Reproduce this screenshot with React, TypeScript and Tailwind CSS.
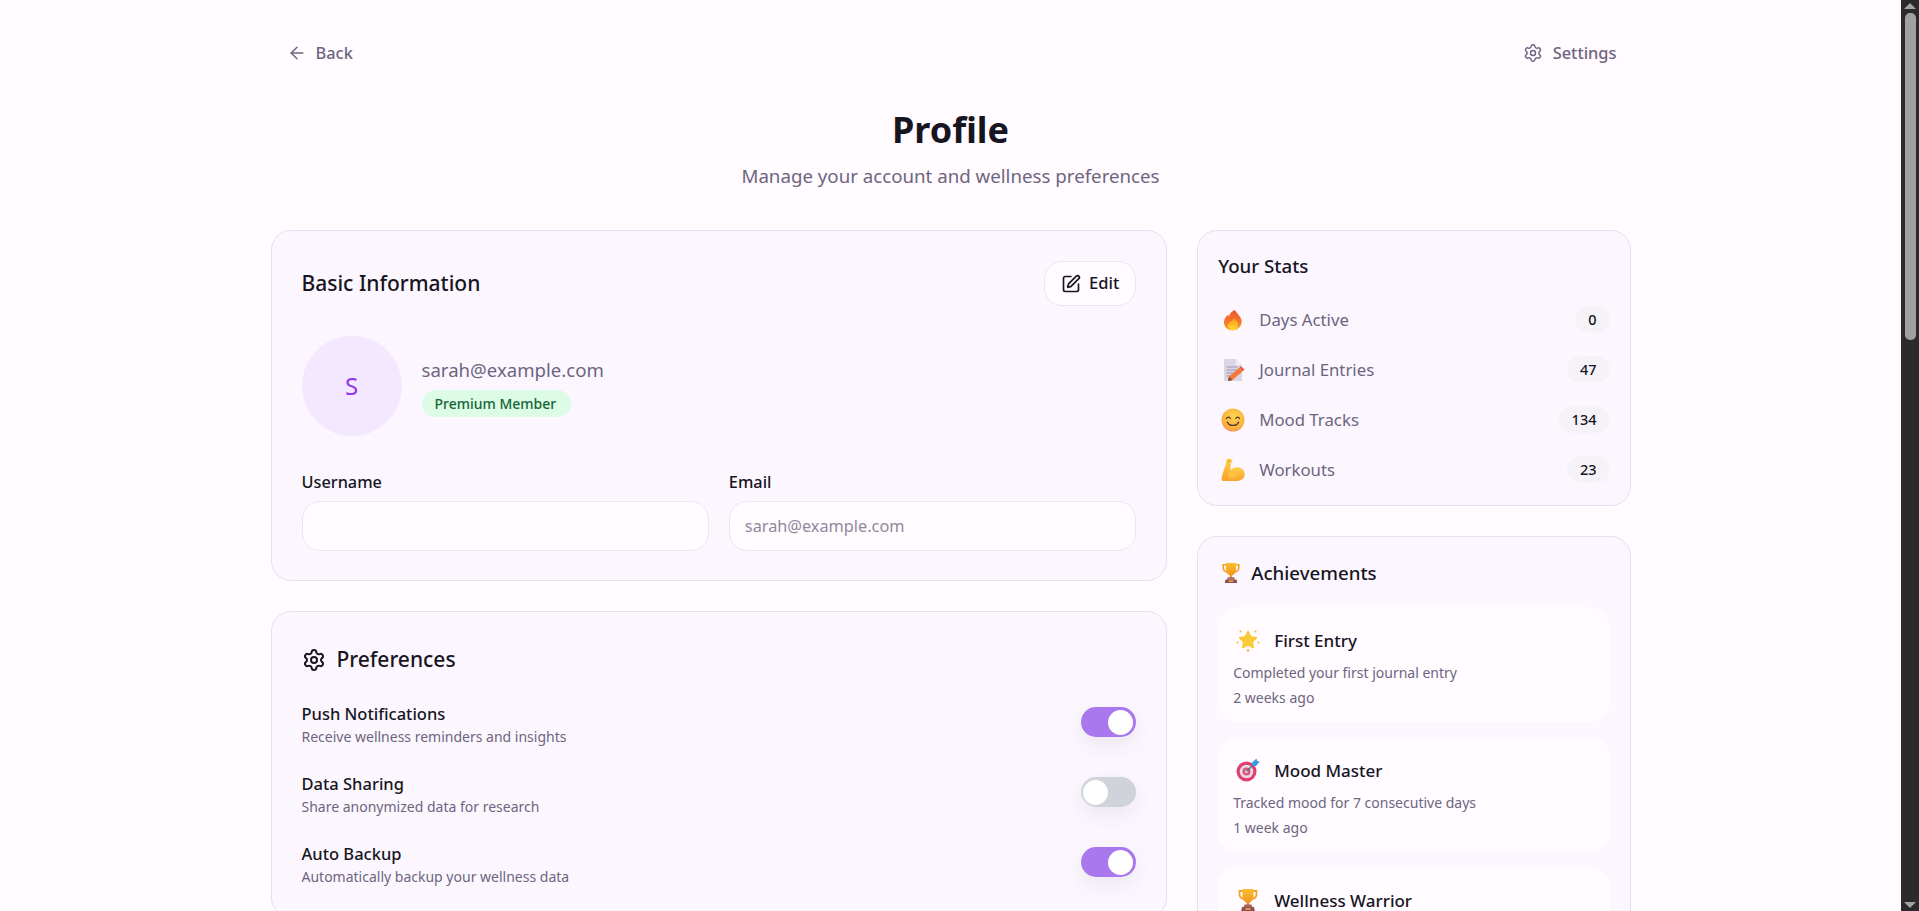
import { ArrowLeft, Settings, SquarePen } from "lucide-react";
import type { ReactNode } from "react";

function Flame() {
  return (
    <svg viewBox="0 0 24 24" className="h-6 w-6">
      <defs>
        <linearGradient id="fl" x1="0" y1="0" x2="0" y2="1">
          <stop offset="0" stopColor="#f0562e" />
          <stop offset="0.6" stopColor="#f5762b" />
          <stop offset="1" stopColor="#f9a01f" />
        </linearGradient>
        <linearGradient id="fi" x1="0" y1="0" x2="0" y2="1">
          <stop offset="0" stopColor="#fb9a1c" />
          <stop offset="1" stopColor="#fdd835" />
        </linearGradient>
      </defs>
      <g transform="translate(-2.400 0) scale(1.200 1)">
        <path d="M13.400 1.200c.5 3 4.900 6.300 5.700 10.800.8 5-2.600 10.300-7.200 10.300-4.300 0-7.600-3.400-7.400-8.300.1-3 1.700-5.500 3.700-7.400 0 1-.1 1.900.4 2.500.1-3 2.300-5.900 5-7.200l-.2-.7z" fill="url(#fl)" />
        <path d="M13.200 10c.5 2 3.200 3.800 3.200 7 0 3-2 5.300-4.500 5.300s-4.400-2.200-4.300-5c.1-2.800 4-4.100 5.600-7.300z" fill="url(#fi)" />
      </g>
    </svg>
  );
}

function Memo() {
  return (
    <svg viewBox="0 0 24 24" className="h-6 w-6">
      <path d="M3 1h12l6 6v16H3z" fill="#dcd6e4" />
      <path d="M15 1l6 6h-6z" fill="#f1edf5" />
      <path d="M5.500 9h11M5.500 12h10M5.500 15h7M5.500 18h4" stroke="#9d95ad" strokeWidth="1" />
      <path d="M7 23l1-4.500L18.500 9.500l3.500 3.500-10.500 9z" fill="#f4793a" />
      <path d="M18.500 9.500l1.500-1.300 3.500 3.500-1.500 1.300z" fill="#e8503f" />
      <path d="M7 23l1-4.500 3.500 3.500z" fill="#7a4a36" />
    </svg>
  );
}

function Smile() {
  return (
    <svg viewBox="0 0 24 24" className="h-6 w-6">
      <defs>
        <radialGradient id="sm" cx="0.55" cy="0.35" r="0.8">
          <stop offset="0" stopColor="#fdd44d" />
          <stop offset="0.65" stopColor="#fbb040" />
          <stop offset="1" stopColor="#f2786c" />
        </radialGradient>
      </defs>
      <circle cx="12" cy="12" r="11.500" fill="url(#sm)" />
      <path d="M5.500 10.500c.8-1.800 3-1.800 3.800 0M14.700 10.500c.8-1.800 3-1.800 3.800 0" stroke="#5b3a2a" strokeWidth="1.300" fill="none" strokeLinecap="round" />
      <path d="M6.500 14.200c1.500 4.200 9.500 4.200 11 0" stroke="#5b3a2a" strokeWidth="1.400" fill="none" strokeLinecap="round" />
    </svg>
  );
}

function Muscle() {
  return (
    <svg viewBox="0 0 24 24" className="h-6 w-6">
      <defs>
        <linearGradient id="mu" x1="0" y1="0" x2="0" y2="1">
          <stop offset="0" stopColor="#fdd048" />
          <stop offset="1" stopColor="#f9a02c" />
        </linearGradient>
      </defs>
      <path d="M6 1.200c1.800-.8 4.800-.4 5.400 1.400.4 1.200-.5 2-1.700 2.100L9.500 11l-.2 12H2.500C1 23 .4 22 .6 20.600 1.200 16 3.300 10.400 5 6.200c-.2-2 .2-4 1-5z" fill="url(#mu)" />
      <ellipse cx="16" cy="16.200" rx="7.800" ry="6.900" fill="url(#mu)" />
      <path d="M8 15c-1 3-.5 6 1 8h7v-6z" fill="url(#mu)" />
      <circle cx="8" cy="3" r="1" fill="#f9a02c" />
    </svg>
  );
}

function Trophy({ className }: { className: string }) {
  return (
    <svg viewBox="0 0 24 24" className={className}>
      <defs>
        <linearGradient id="tr" x1="0" y1="0" x2="0" y2="1">
          <stop offset="0" stopColor="#fbbf30" />
          <stop offset="1" stopColor="#ef8f1f" />
        </linearGradient>
      </defs>
      <path d="M7 3H3.500v3c0 3 1.800 4.500 4.500 5M17 3h3.500v3c0 3-1.800 4.500-4.500 5" stroke="#f3a526" strokeWidth="1.800" fill="none" />
      <path d="M6.500 1h11v7c0 4-2.400 6-4.300 6.800V17h-2.400v-2.200C8.900 14 6.500 12 6.500 8z" fill="url(#tr)" />
      <path d="M8.500 16.500h7l.8 2.500H7.700z" fill="#a8655f" />
      <path d="M6 19h12l.8 4H5.200z" fill="#8c4f55" />
      <rect x="9.500" y="20.200" width="5" height="1.500" fill="#f5b335" />
    </svg>
  );
}

function Star() {
  return (
    <svg viewBox="0 0 24 24" className="h-6 w-6">
      <path d="M12 3.500l2.700 5.300 5.800.9-4.200 4.100 1 5.800-5.300-2.800-5.300 2.800 1-5.800-4.200-4.100 5.800-.9z" fill="#fbc935" stroke="#fbc935" strokeWidth="1.500" strokeLinejoin="round" />
      <circle cx="12" cy="22.500" r="1.200" fill="#f3b42c" />
      <circle cx="1.500" cy="14.500" r="1" fill="#f3b42c" />
      <circle cx="22.500" cy="14.500" r="1" fill="#f3b42c" />
      <circle cx="4.500" cy="3.500" r="1" fill="#f3b42c" />
      <circle cx="19.500" cy="3.500" r="1" fill="#f3b42c" />
    </svg>
  );
}

function Target() {
  return (
    <svg viewBox="0 0 24 24" className="h-6 w-6">
      <circle cx="10.500" cy="13.500" r="10" fill="#e0406f" />
      <circle cx="10.500" cy="13.500" r="6.800" fill="#e9dbe4" />
      <circle cx="10.500" cy="13.500" r="4" fill="#d8557f" />
      <circle cx="10.500" cy="13.500" r="1.600" fill="#e9dbe4" />
      <path d="M10.500 13.500L20 4" stroke="#5c6f8a" strokeWidth="1.200" />
      <path d="M16 4.500L20.500 0.500l.7 2.500 2.500.7-4 4.500-3.500-.5z" fill="#3a9be8" />
    </svg>
  );
}

function Toggle({ on }: { on: boolean }) {
  return (
    <div
      className={
        on
          ? "mt-[10px] flex h-[30px] w-[55px] shrink-0 items-center justify-end rounded-full bg-[#a978ef] pr-[3px] shadow-[0_8px_20px_rgba(60,40,90,0.08)]"
          : "mt-[10px] flex h-[30px] w-[55px] shrink-0 items-center justify-start rounded-full bg-[#d0d4da] pl-[2px] shadow-[0_8px_20px_rgba(60,40,90,0.08)]"
      }
    >
      <div className="h-[25px] w-[25px] rounded-full bg-white" />
    </div>
  );
}

function StatRow({ icon, label, value }: { icon: ReactNode; label: string; value: number }) {
  return (
    <div className="flex h-[27px] items-center justify-between">
      <div className="flex items-center">
        <span className="flex w-[29px] justify-center">{icon}</span>
        <span className="mt-[1px] ml-[12px] text-[16.8px] text-[#6d6580]">{label}</span>
      </div>
      <span className="flex h-[27px] items-center rounded-full bg-[#f6f3f8] px-[13px] text-[14.5px] font-medium text-[#17151f]">
        {value}
      </span>
    </div>
  );
}

function Achievement({ icon, title, copy, time }: { icon: ReactNode; title: string; copy: string; time: string }) {
  return (
    <div className="h-[115px] shrink-0 rounded-[20px] bg-[#fffbff] px-[15px] pt-[20px]">
      <div className="flex h-[26px] items-center">
        <span className="flex w-[30px] justify-center">{icon}</span>
        <span className="mt-[1px] ml-[11px] text-[17px] font-medium text-[#17151f]">{title}</span>
      </div>
      <p className="mt-[7px] text-[14px] leading-[25px] text-[#6d6580]">{copy}</p>
      <p className="text-[14px] leading-[25px] text-[#6d6580]">{time}</p>
    </div>
  );
}

function Pref({ title, copy, on }: { title: string; copy: string; on: boolean }) {
  return (
    <div className="flex h-[50px] items-start justify-between">
      <div className="pt-[5px]">
        <p className="text-[16.5px] leading-[24px] font-medium text-[#17151f]">{title}</p>
        <p className="-mt-[1px] text-[14px] leading-[24px] text-[#6d6580]">{copy}</p>
      </div>
      <Toggle on={on} />
    </div>
  );
}

export default function App() {
  return (
    <div className="flex h-screen overflow-hidden bg-[#fffbff] font-['Noto_Sans',sans-serif]">
      <main className="min-w-0 flex-1 overflow-hidden">
        <div className="mx-auto w-[1360px] pt-[31px]">
          {/* top bar */}
          <div className="flex h-[44px] items-center justify-between">
            <button className="flex items-center gap-[9px] px-4 text-[16.4px] font-medium text-[#6d6580]">
              <ArrowLeft className="h-5 w-5" strokeWidth={1.75} />
              Back
            </button>
            <button className="flex items-center gap-[10px] pr-[14px] pl-4 text-[16.4px] font-medium text-[#6d6580]">
              <Settings className="h-5 w-5" strokeWidth={1.75} />
              Settings
            </button>
          </div>

          <div className="mt-[35px] text-center">
            <h1 className="text-[36px] leading-[40px] font-bold text-[#17151f]">Profile</h1>
            <p className="mt-[12px] text-[18.7px] leading-[28px] text-[#6d6580]">Manage your account and wellness preferences</p>
          </div>

          <div className="mt-[40px] grid grid-cols-3 gap-[30px]">
            <div className="col-span-2 flex flex-col gap-[30px]">
              {/* basic info */}
              <section className="h-[351px] rounded-[20px] border border-[#e6dfee] bg-[#fcf7fe] p-[30px]">
                <div className="flex items-center justify-between">
                  <h2 className="text-[21px] font-medium text-[#17151f]">Basic Information</h2>
                  <button className="flex h-[45px] w-[92px] items-center justify-center gap-2 rounded-[18px] border border-[#ece5f2] bg-[#fffbff] text-[16.5px] font-medium text-[#17151f]">
                    <SquarePen className="h-5 w-5" />
                    Edit
                  </button>
                </div>
                <div className="mt-[30px] flex items-center gap-5">
                  <div className="flex h-[100px] w-[100px] items-center justify-center rounded-full bg-[#f3e8ff] text-[24px] text-[#9333ea]">S</div>
                  <div>
                    <p className="text-[18.6px] leading-[28px] text-[#6d6580]">sarah@example.com</p>
                    <span className="mt-[6px] inline-flex h-[27px] items-center rounded-full bg-[#dcfce7] pr-[15px] pl-[13px] text-[14px] font-medium text-[#166534]">Premium Member</span>
                  </div>
                </div>
                <div className="mt-[34px] grid grid-cols-2 gap-5">
                  <div>
                    <label className="block text-[16.3px] leading-[24px] font-medium text-[#17151f]">Username</label>
                    <div className="mt-[7px] h-[50px] rounded-[18px] border border-[#ece5f2] bg-[#fffbff]" />
                  </div>
                  <div>
                    <label className="block text-[16.3px] leading-[24px] font-medium text-[#17151f]">Email</label>
                    <div className="mt-[7px] flex h-[50px] items-center rounded-[18px] border border-[#ece5f2] bg-[#fffbff] px-[15px] pt-[1px] text-[16.3px] text-[#8f889c]">sarah@example.com</div>
                  </div>
                </div>
              </section>

              {/* preferences */}
              <section className="rounded-[20px] border border-[#e6dfee] bg-[#fcf7fe] p-[30px]">
                <div className="flex h-[35px] items-center gap-[11px]">
                  <Settings className="h-6 w-6 text-[#17151f]" />
                  <h2 className="text-[21px] font-medium text-[#17151f]">Preferences</h2>
                </div>
                <div className="mt-[20px] flex flex-col gap-5">
                  <Pref title="Push Notifications" copy="Receive wellness reminders and insights" on />
                  <Pref title="Data Sharing" copy="Share anonymized data for research" on={false} />
                  <Pref title="Auto Backup" copy="Automatically backup your wellness data" on />
                </div>
              </section>
            </div>

            <div className="flex flex-col gap-[30px]">
              {/* stats */}
              <section className="h-[276px] rounded-[20px] border border-[#e6dfee] bg-[#fcf7fe] px-5 pt-[21px]">
                <h3 className="text-[18.7px] leading-[28px] font-medium text-[#17151f]">Your Stats</h3>
                <div className="mt-[26px] flex flex-col gap-[23px]">
                  <StatRow icon={<Flame />} label="Days Active" value={0} />
                  <StatRow icon={<Memo />} label="Journal Entries" value={47} />
                  <StatRow icon={<Smile />} label="Mood Tracks" value={134} />
                  <StatRow icon={<Muscle />} label="Workouts" value={23} />
                </div>
              </section>

              {/* achievements */}
              <section className="rounded-[20px] border border-[#e6dfee] bg-[#fcf7fe] p-5">
                <div className="flex h-[32px] items-center gap-[9px] pl-[2px]">
                  <Trophy className="h-[22px] w-[22px]" />
                  <h3 className="text-[18.7px] leading-[28px] font-medium text-[#17151f]">Achievements</h3>
                </div>
                <div className="mt-[18px] flex flex-col gap-[15px]">
                  <Achievement icon={<Star />} title="First Entry" copy="Completed your first journal entry" time="2 weeks ago" />
                  <Achievement icon={<Target />} title="Mood Master" copy="Tracked mood for 7 consecutive days" time="1 week ago" />
                  <Achievement icon={<Trophy className="h-6 w-6" />} title="Wellness Warrior" copy="Completed 30 wellness activities" time="3 days ago" />
                </div>
              </section>
            </div>
          </div>
        </div>
      </main>

      {/* window scrollbar */}
      <div className="flex w-[18px] shrink-0 flex-col items-center bg-[#2b2b2b]">
        <svg viewBox="0 0 14 6" className="mt-[3px] h-[6px] w-[14px]">
          <path d="M7 0l6 6H1z" fill="#a3a3a3" />
        </svg>
        <div className="mt-[4px] h-[327px] w-[11px] rounded-[5px] bg-[#a0a0a0]" />
        <svg viewBox="0 0 14 6" className="mt-auto mb-[3px] h-[6px] w-[14px]">
          <path d="M1 0h12L7 6z" fill="#a3a3a3" />
        </svg>
      </div>
    </div>
  );
}
